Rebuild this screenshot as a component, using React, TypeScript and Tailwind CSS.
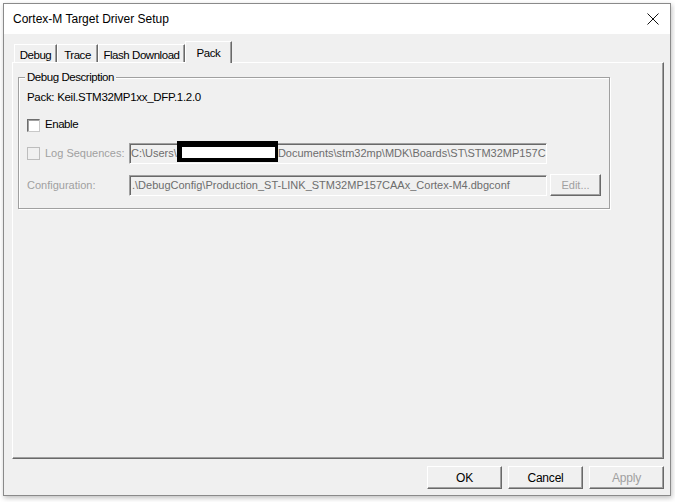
import React from "react";

const sunken =
  "border-t border-l border-b border-r border-t-[#a0a0a0] border-l-[#a0a0a0] border-b-white border-r-white shadow-[inset_1px_1px_0_#696969]";
const raised =
  "border-t border-l border-b border-r border-t-white border-l-white border-b-[#696969] border-r-[#696969] shadow-[inset_-1px_-1px_0_#a0a0a0]";

function Tab({ label, w, selected }: { label: string; w: string; selected?: boolean }) {
  if (selected) {
    return (
      <div
        className={`relative z-10 -mb-[1px] h-[22px] ${w} bg-[#f0f0f0] border-t border-l border-r border-t-white border-l-white border-r-[#696969] shadow-[inset_-1px_0_0_#a0a0a0] flex items-start justify-center pt-[3px]`}
      >
        <span>{label}</span>
      </div>
    );
  }
  return (
    <div
      className={`h-[18px] ${w} border-t border-l border-r border-t-white border-l-white border-r-[#696969] shadow-[inset_-1px_0_0_#a0a0a0] flex items-start justify-center pt-[2px]`}
    >
      <span>{label}</span>
    </div>
  );
}

function Btn({ label, disabled }: { label: string; disabled?: boolean }) {
  return (
    <div
      className={`w-[75px] h-[23px] ${raised} flex items-center justify-center ${
        disabled ? "text-[#a0a0a0]" : "text-black"
      }`}
    >
      {label}
    </div>
  );
}

export default function App() {
  return (
    <div
      className="w-[675px] h-[502px] bg-white overflow-hidden pt-[3px] pl-[3px] relative text-[11.5px] tracking-[-0.45px] text-black"
      style={{ fontFamily: '"Liberation Sans", Arial, sans-serif' }}
    >
      <div className="w-[668px] h-[493px] border border-[#8a8a8a] flex flex-col shadow-[1px_2px_5px_rgba(0,0,0,0.25)]">
        {/* Title bar */}
        <div className="h-[30px] bg-white flex items-center justify-between pl-[9px] pr-[10px]">
          <span className="text-[12px] tracking-normal text-black">Cortex-M Target Driver Setup</span>
          <svg width="12" height="12" viewBox="0 0 12 12" className="mr-[1px]">
            <path d="M0.5 0.5 L11.5 11.5 M11.5 0.5 L0.5 11.5" stroke="#111" strokeWidth="1" />
          </svg>
        </div>

        {/* Body */}
        <div className="flex-1 bg-[#f0f0f0] pl-[8px] pr-[6px] pt-[6px] flex flex-col">
          {/* Tab strip */}
          <div className="h-[22px] flex items-end pl-[2px]">
            <Tab label="Debug" w="w-[43px]" />
            <Tab label="Trace" w="w-[41px]" />
            <Tab label="Flash Download" w="w-[87px]" />
            <Tab label="Pack" w="w-[47px]" selected />
          </div>

          {/* Tab page */}
          <div className="w-[652px] h-[397px] border-t border-l border-b border-r border-t-white border-l-white border-b-[#696969] border-r-[#696969] shadow-[inset_-1px_-1px_0_#a0a0a0]">
            <div className="ml-[5px] mt-[14px] w-[592px] h-[132px] relative border border-[#a0a0a0] shadow-[1px_1px_0_white,inset_1px_1px_0_white] flex flex-col pl-[8px]">
              <span className="absolute left-[6px] -top-[8px] px-[2px] bg-[#f0f0f0] leading-[14px]">
                Debug Description
              </span>

              <div className="h-[20px] mt-[10px] flex items-center tracking-[-0.3px]">
                Pack: Keil.STM32MP1xx_DFP.1.2.0
              </div>

              <div className="h-[20px] mt-[7px] flex items-center">
                <div className="w-[13px] h-[13px] bg-white border border-t-[#6d6d6d] border-l-[#6d6d6d] border-b-[#c8c8c8] border-r-[#c8c8c8] shadow-[inset_1px_1px_0_#a0a0a0]" />
                <span className="ml-[5px]">Enable</span>
              </div>

              <div className="h-[21px] mt-[8px] flex items-center text-[11px] tracking-normal">
                <div className="w-[102px] flex items-center text-[#a0a0a0]">
                  <div className="w-[13px] h-[13px] bg-[#f0f0f0] border border-[#bdbdbd]" />
                  <span className="ml-[5px]">Log Sequences:</span>
                </div>
                <div className={`w-[418px] h-[21px] ${sunken} bg-[#f0f0f0] flex items-center pl-[1px] overflow-hidden whitespace-nowrap text-[#6d6d6d]`}>
                  <span>C:\Users\</span>
                  <span className="inline-block w-[98px] shrink-0" />
                  <span>\Documents\stm32mp\MDK\Boards\ST\STM32MP157C</span>
                </div>
              </div>

              <div className="h-[22px] mt-[10px] flex items-center text-[11px] tracking-normal">
                <div className="w-[102px] text-[#a0a0a0]">Configuration:</div>
                <div className={`w-[418px] h-[21px] ${sunken} bg-[#f0f0f0] flex items-center pl-[2px] overflow-hidden whitespace-nowrap text-[#6d6d6d]`}>
                  .\DebugConfig\Production_ST-LINK_STM32MP157CAAx_Cortex-M4.dbgconf
                </div>
                <div className={`ml-[3px] w-[51px] h-[22px] ${raised} flex items-center justify-center text-[#a0a0a0]`}>
                  Edit...
                </div>
              </div>
            </div>
          </div>

          {/* Buttons */}
          <div className="mt-[7px] flex justify-end gap-[6px] text-[12px] tracking-[-0.2px]">
            <Btn label="OK" />
            <Btn label="Cancel" />
            <Btn label="Apply" disabled />
          </div>
        </div>
      </div>

      {/* redaction overlay */}
      <div className="absolute left-[177px] top-[141px] w-[101px] h-[21px] bg-white border-black border-t-[6px] border-b-[4px] border-l-[5px] border-r-[3px]" />
    </div>
  );
}
